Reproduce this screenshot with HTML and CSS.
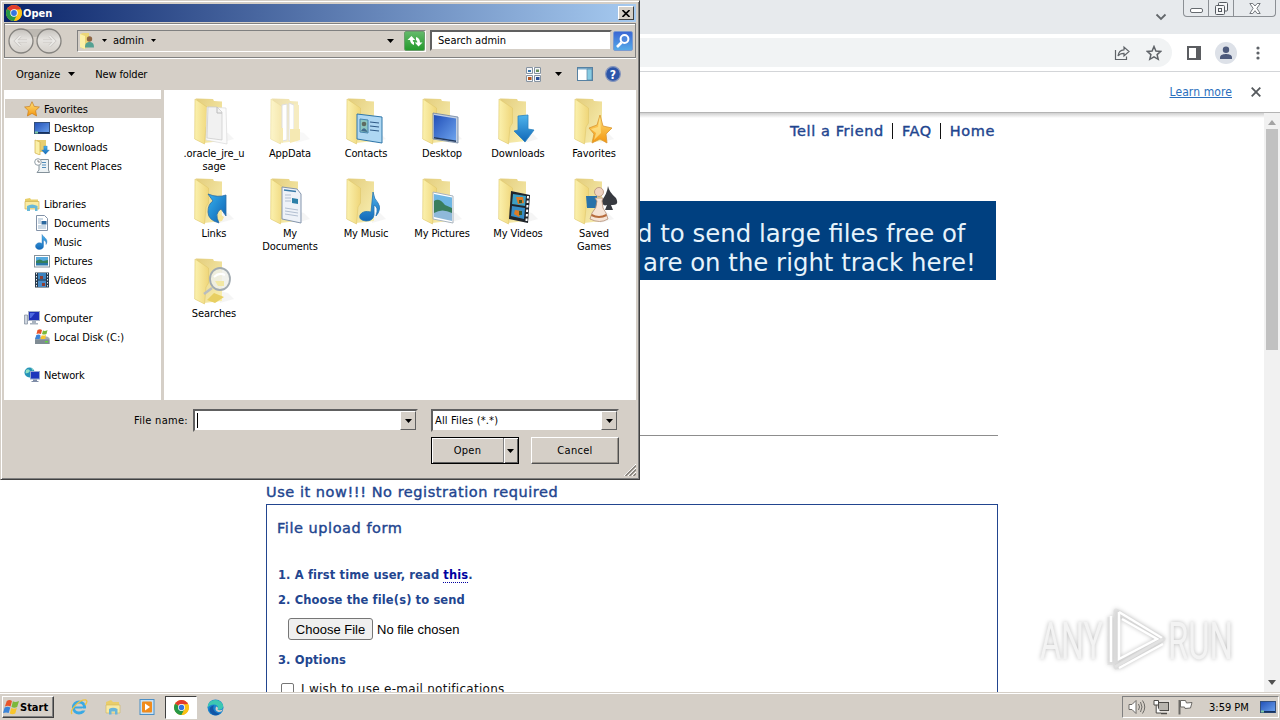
FILE: index.html
```
<!DOCTYPE html>
<html lang="en">
<head>
    <meta charset="UTF-8">
    <meta name="viewport" content="width=device-width, initial-scale=1.0">
    <title>File upload form</title>
    <link rel="stylesheet" href="styles.css">
</head>
<body>

<!-- shared icon shapes -->
<svg class="defs" width="0" height="0">
    <defs>
        <linearGradient id="g-flap" x1="0" x2="1"><stop offset="0" stop-color="#fbf1ae"/><stop offset="1" stop-color="#efd67a"/></linearGradient>
        <linearGradient id="g-back" x1="0" x2="1" y2="1"><stop offset="0" stop-color="#e3cd7c"/><stop offset="1" stop-color="#faf0b4"/></linearGradient>
        <linearGradient id="g-blue" y1="0" x2="0" y2="1"><stop offset="0" stop-color="#4fb4ec"/><stop offset="1" stop-color="#1268b8"/></linearGradient>
        <linearGradient id="g-screen" x1="0" x2="1" y2="1"><stop offset="0" stop-color="#2250b8"/><stop offset="1" stop-color="#6ea4ee"/></linearGradient>
        <linearGradient id="g-star" y1="0" x2="0" y2="1"><stop offset="0" stop-color="#ffe27a"/><stop offset="1" stop-color="#f3960f"/></linearGradient>
        <linearGradient id="g-round" y1="0" x2="0" y2="1"><stop offset="0" stop-color="#c4c1bc"/><stop offset=".45" stop-color="#e6e4e0"/><stop offset="1" stop-color="#d4d0ca"/></linearGradient>
        <linearGradient id="g-edge" x1="0" x2="1" y2="1"><stop offset="0" stop-color="#35b0ee"/><stop offset="1" stop-color="#0d5fb0"/></linearGradient>
        <symbol id="folder" viewBox="0 0 48 48">
            <path d="M30 46 L44 42 L38 36 L30 34z" fill="#efefef" opacity=".6"/>
            <path d="M6 1.5 L23 2 L24 4 L32 4.5 V44 L14 46z" fill="url(#g-back)"/>
            <path d="M5 2 L18.5 11 V26 L16 30 L14.5 47 L4.7 42z" fill="url(#g-flap)" stroke="#dfc86c" stroke-width=".6"/>
        </symbol>
        <symbol id="chrome" viewBox="0 0 16 16">
            <circle cx="8" cy="8" r="8" fill="#fbc116"/>
            <path d="M8 8 L1.1 4 A8 8 0 0 1 14.9 4z" fill="#e33b2e"/>
            <path d="M8 8 L1.1 4 A8 8 0 0 0 8 16 L11.4 10z" fill="#279847"/>
            <path d="M8 4.4 H15.1 A8 8 0 0 1 8 16 L11 10z" fill="#fbc116"/>
            <circle cx="8" cy="8" r="3.7" fill="#fff"/>
            <circle cx="8" cy="8" r="2.9" fill="#3474e0"/>
        </symbol>
        <symbol id="star" viewBox="0 0 16 16">
            <path d="M8 .7 L10.2 5.4 L15.4 6 L11.6 9.7 L12.6 15 L8 12.4 L3.4 15 L4.4 9.7 L.6 6 L5.8 5.4z" fill="url(#g-star)" stroke="#c87d1c" stroke-width=".7"/>
        </symbol>
        <symbol id="note" viewBox="0 0 16 16">
            <path d="M8 .5 C10 4 15 5 12 10.500 C12.500 7.500 10.500 6.500 9.500 6.300 V12 A4 3.400 0 1 1 8 9.500z" fill="url(#g-blue)" stroke="#2470b8" stroke-width=".4"/>
        </symbol>
        <symbol id="down" viewBox="0 0 16 16">
            <path d="M5 1 H11 V8 H15 L8 15.5 L1 8 H5z" fill="url(#g-blue)" stroke="#1b6cae" stroke-width=".5"/>
        </symbol>
        <symbol id="screen" viewBox="0 0 16 16">
            <rect x=".5" y="2.5" width="15" height="11" fill="url(#g-screen)" stroke="#34507c"/>
            <path d="M1 12 H15 V13.5 H1z" fill="#15315e"/><path d="M1 11.5h3v2H1z" fill="#7fc8a0"/>
        </symbol>
        <symbol id="tri" viewBox="0 0 7 4"><path d="M0 0 H7 L3.5 4z" fill="#000"/></symbol>
    </defs>
</svg>

<div class="browser">
    <div class="tab-strip">
        <svg class="tab-search" width="12" height="8" viewBox="0 0 12 8"><path d="M1.5 1.5 L6 6 L10.5 1.5" fill="none" stroke="#63676b" stroke-width="1.8"/></svg>
        <div class="window-controls">
            <span class="wc"><svg width="13" height="5" viewBox="0 0 13 5"><rect x=".5" y=".5" width="12" height="4" rx="1.5" fill="#fff" stroke="#666b70"/></svg></span>
            <span class="wc"><svg width="13" height="13" viewBox="0 0 13 13" fill="#f5f6f7" stroke="#555a60"><rect x="3.5" y=".5" width="9" height="8.500" rx="1"/><rect x=".5" y="3.500" width="9" height="9" rx="1"/><rect x="3.500" y="6.500" width="3" height="3"/></svg></span>
            <span class="wc wc-close"><svg width="12" height="11" viewBox="0 0 12 11"><path d="M.8.5 H3.8 L6 3 L8.2.5 H11.2 L7.900 5.300 L11.200 10.500 H8.200 L6 7.700 L3.800 10.500 H.800 L4.100 5.300z" fill="#fff" stroke="#666b70" stroke-width=".9"/></svg></span>
        </div>
    </div>
    <div class="toolbar">
        <div class="omnibox">
            <svg width="16" height="16" viewBox="0 0 16 16" fill="none" stroke="#5f6368" stroke-width="1.2"><path d="M1.500 5 V14.500 H12.500 V11.500"/><path d="M4 11 C4.500 7 6.500 5 10 4.800 V2 L15 6.500 L10 11 V8.300 C7 8.300 5.300 9 4 11z"/></svg>
            <svg width="16" height="16" viewBox="0 0 16 16"><path d="M8 1.500 L9.900 6 L14.700 6.400 L11.100 9.600 L12.200 14.300 L8 11.800 L3.800 14.300 L4.900 9.600 L1.300 6.400 L6.100 6z" fill="none" stroke="#5f6368" stroke-width="1.500"/></svg>
        </div>
        <svg class="side-panel" width="14" height="14" viewBox="0 0 14 14"><path d="M1 1 H13 V13 H1z" fill="#fff" stroke="#5b5d61" stroke-width="2"/><path d="M9 0 H14 V14 H9z" fill="#5b5d61"/></svg>
        <svg class="avatar" width="22" height="22" viewBox="0 0 22 22"><circle cx="11" cy="11" r="11" fill="#dde1e8"/><circle cx="11" cy="7.800" r="3.200" fill="#4d5a7c"/><path d="M5 17 V15.500 C5 12.500 9 12 11 12 C13 12 17 12.500 17 15.500 V17z" fill="#4d5a7c"/></svg>
        <svg class="kebab" width="4" height="14" viewBox="0 0 4 14" fill="#5f6368"><circle cx="2" cy="2" r="1.600"/><circle cx="2" cy="7" r="1.600"/><circle cx="2" cy="12" r="1.600"/></svg>
    </div>
    <div class="infobar">
        <a class="learn-more">Learn more</a>
        <svg width="10" height="10" viewBox="0 0 10 10"><path d="M.700.700 L9.300 9.300 M9.300.700 L.700 9.300" stroke="#55595d" stroke-width="1.800"/></svg>
    </div>
    <div class="viewport">
        <div class="page">
            <div class="top-links">
                <a>Tell a Friend</a>
                <a>FAQ</a>
                <a>Home</a>
            </div>
            <div class="banner">
                <p class="banner-one">d to send large files free of</p>
                <p class="banner-two">are on the right track here!</p>
            </div>
            <hr>
            <h2>Use it now!!! No registration required</h2>
            <div class="form-box">
                <h3>File upload form</h3>
                <p class="step step-one">1. A first time user, read <a class="this">this</a>.</p>
                <p class="step">2. Choose the file(s) to send</p>
                <div class="file-row">
                    <button class="choose">Choose File</button>
                    <span>No file chosen</span>
                </div>
                <p class="step step-three">3. Options</p>
                <label class="notify"><span class="check"></span><span>I wish to use e-mail notifications</span></label>
            </div>
        </div>
        <div class="scrollbar">
            <svg width="8" height="5" viewBox="0 0 8 5"><path d="M0 5 L4 0 L8 5z" fill="#a3a3a3"/></svg>
            <div class="thumb"></div>
            <svg width="8" height="5" viewBox="0 0 8 5"><path d="M0 0 L4 5 L8 0z" fill="#505050"/></svg>
        </div>
    </div>
</div>

<div class="taskbar">
    <div class="start">
        <svg width="17" height="16" viewBox="0 0 18 17"><path d="M4 2 Q7 0 9.500 2 L8 8 Q5 6.500 2 8z" fill="#e8552a"/><path d="M10.500 2.500 Q13 4 17 2 L15 8.500 Q12 10 9 8.500z" fill="#7cb83a"/><path d="M1.700 9 Q5 7.500 7.700 9 L6 15 Q3.500 13.500 0 15z" fill="#3b84d8"/><path d="M8.700 9.500 Q11.500 11 14.700 9.500 L13 15.500 Q10 17 7.200 15.500z" fill="#f7c52c"/></svg>
        <b>Start</b>
    </div>
    <div class="quick">
        <span class="task"><svg width="18" height="18" viewBox="0 0 18 18"><circle cx="9" cy="9.500" r="5.600" fill="none" stroke="#39a9e4" stroke-width="3"/><path d="M5 9.500 H15" stroke="#39a9e4" stroke-width="2"/><path d="M12 11.500 H17" stroke="#d4d0c8" stroke-width="2"/><path d="M2 16 C-1 12 10 1 16 2 C18 3 16 6 15 7" fill="none" stroke="#edc343" stroke-width="1.300"/></svg></span>
        <span class="task"><svg width="18" height="18" viewBox="0 0 18 18"><path d="M2 4 L7 2 L9 4 H15 V15 H2z" fill="#e9cd6a"/><path d="M2 7 H16 V15 H2z" fill="#f8e9a2" stroke="#d1b55a" stroke-width=".600"/><path d="M5 16.500 V11 Q9 8.500 13.500 11 V16.500 H11 V13.500 H7.500 V16.500z" fill="#69b5d9"/></svg></span>
        <span class="task"><svg width="18" height="18" viewBox="0 0 18 18"><rect x="2" y="1.500" width="14" height="15" fill="#c8e1f4" stroke="#4b8fc6"/><rect x="4" y="3.500" width="10" height="11" rx="1" fill="#f08b1c"/><path d="M7 5.500 L12 9 L7 12.500z" fill="#fff"/></svg></span>
        <span class="task active"><svg width="15" height="15"><use href="#chrome"/></svg></span>
        <span class="task"><svg width="17" height="17" viewBox="0 0 17 17"><circle cx="8.500" cy="8.500" r="8" fill="#1a84cf"/><path d="M1 6 C3 0 13-1 16 6 C17 10 13 11.500 10.500 10.500 C12 8 10 5.500 7 5.500 C4 5.500 1.500 7 .700 9z" fill="#3cc7b2"/><path d="M7 6.500 C5 9 7 14 13 14.500 C10 18 3 16 2.500 11 C2.500 8 5 6.500 7 6.500z" fill="#1356a6"/><path d="M9 7.500 Q12 8.500 10.500 10.500 Q12 12 16 10.500 Q14.500 13.500 11.500 13 Q7.500 12 9 7.500z" fill="#d5cfc7"/></svg></span>
    </div>
    <div class="tray">
        <svg width="18" height="16" viewBox="0 0 18 16" fill="#fff" stroke="#6c6a66"><path d="M1 5.500 H4 L8 1.500 V14.500 L4 10.500 H1z"/><path d="M10.500 5 Q12.500 8 10.500 11 M12.500 3 Q15.500 8 12.500 13 M14.500 1.500 Q19 8 14.500 14.500" fill="none"/></svg>
        <svg width="17" height="16" viewBox="0 0 17 16"><rect x="5.500" y="3.500" width="10" height="8" fill="#b8b5af" stroke="#4c4a47"/><rect x="4" y="2" width="13" height="11" fill="none" stroke="#f5f5f5" stroke-width=".800"/><path d="M8 14.500 H14" stroke="#4c4a47" stroke-width="1.500"/><path d="M1 1.500 H5.500 V6 H1z M3.200 6 V14 H8" fill="#fff" stroke="#4c4a47"/></svg>
        <svg width="17" height="16" viewBox="0 0 17 16"><path d="M2.500 1 V15.500" stroke="#6c6a66" stroke-width="2"/><path d="M3.500 1.500 H8.500 L9.500 4 L15 3.500 L13.500 9 L8 9.500 L7.500 8 H3.500z" fill="#fff" stroke="#6c6a66"/></svg>
        <span class="clock">3:59 PM</span>
        <svg width="16" height="16"><use href="#screen"/></svg>
    </div>
</div>

<!-- watermark -->
<svg class="watermark" width="204" height="72" viewBox="0 0 204 72">
    <g fill="none" stroke-linejoin="round" stroke="#dcdcdc" stroke-width="5" opacity=".6"><path d="M80 6 L127 34 L80 62z M74 12 V60"/></g>
    <g class="wm-text"><text x="4" y="54" textLength="63" lengthAdjust="spacingAndGlyphs">ANY</text><text x="132" y="54" textLength="65" lengthAdjust="spacingAndGlyphs">RUN</text></g>
    <g fill="none" stroke="#fff" stroke-width="2.500"><path d="M75 57 V11 M83 7 L126 33 M83 7 V54 L121 34 L86 14 M83 63 L127 39"/></g>
    <path d="M79 62 L127 34" stroke="#e2e2e2" stroke-width="3"/>
</svg>

<div class="dialog">
    <div class="title-bar">
        <svg width="16" height="16"><use href="#chrome"/></svg>
        <b>Open</b>
        <span class="close"><svg width="8" height="7" viewBox="0 0 8 7"><path d="M.500 0 L7.500 7 M7.500 0 L.500 7" stroke="#000" stroke-width="1.600"/></svg></span>
    </div>
    <div class="nav-row">
        <svg class="arrows" width="56" height="28" viewBox="0 0 56 28">
            <path d="M14 2 H42 V7 Q28 13 14 7z" fill="#bdb9b2"/>
            <circle cx="14" cy="14" r="12" fill="url(#g-round)" stroke="#85837f" stroke-width="1.300"/>
            <circle cx="42" cy="14" r="12" fill="url(#g-round)" stroke="#85837f" stroke-width="1.300"/>
            <path d="M20 14 H9 M13.500 9 L8.500 14 L13.500 19 M36 14 H47 M42.500 9 L47.500 14 L42.500 19" fill="none" stroke="#c9c6c2" stroke-width="3"/>
            <path d="M20 14 H9 M13.500 9 L8.500 14 L13.500 19 M36 14 H47 M42.500 9 L47.500 14 L42.500 19" fill="none" stroke="#ebeae7" stroke-width="1.600"/>
        </svg>
        <div class="address">
            <svg width="16" height="16" viewBox="0 0 16 16"><path d="M1 1 L4 0 H10 V14 L5 16 L1 14z" fill="#ecd677"/><path d="M1 1 L6 3 V16 L1 14z" fill="#fbf0a8"/><circle cx="10.500" cy="6" r="2.700" fill="#8f6643"/><path d="M6 14.500 C6 9.500 8.500 9 10.500 9 S15 9.500 15 14.500z" fill="#54a193"/></svg>
            <svg class="crumb" width="5" height="3"><use href="#tri"/></svg>
            <span>admin</span>
            <svg class="crumb" width="5" height="3"><use href="#tri"/></svg>
            <svg class="history" width="7" height="4"><use href="#tri"/></svg>
        </div>
        <span class="refresh"><svg width="16" height="14" viewBox="0 0 16 14"><path d="M4.500 2 L.500 6 H3 Q3.500 10 7 11 V8 Q5.500 8 5.800 6 H8.200z M11.500 12.500 L15.500 8.500 H13 Q13 4 9 3 V6 Q10.500 6.500 10.300 8.500 H7.800z" fill="#fff"/></svg></span>
        <div class="search">Search admin</div>
        <span class="find"><svg width="16" height="16" viewBox="0 0 16 16"><circle cx="9.500" cy="6" r="3.900" fill="#4e88dd" stroke="#fff" stroke-width="2"/><path d="M6.500 9.500 L2 14" stroke="#fff" stroke-width="2.600"/></svg></span>
    </div>
    <div class="commands">
        <span class="organize">Organize</span>
        <svg width="7" height="4"><use href="#tri"/></svg>
        <span class="new-folder">New folder</span>
        <svg class="view-icon" width="15" height="15" viewBox="0 0 15 15"><path d="M0 0h15v15H0z" fill="#fff"/><g stroke="#8592a0" fill="#f4f6f8"><path d="M.500.500h6v6h-6z M8.500.500h6v6h-6z M.500 8.500h6v6h-6z M8.500 8.500h6v6h-6z"/></g><path d="M2 3h3V5H2z" fill="#3a76ac"/><path d="M10 2.500h3V5h-3z" fill="#68905d"/><path d="M2 10h3.500V13H2z" fill="#b4561e"/><path d="M10 10h3.500V13H10z" fill="#2b4f96"/></svg>
        <svg class="view-tri" width="7" height="4"><use href="#tri"/></svg>
        <svg class="pane-icon" width="16" height="14" viewBox="0 0 16 14"><rect x=".500" y=".500" width="15" height="13" fill="#fff" stroke="#5681a2"/><path d="M1 1h14v1.500H1z" fill="#7aa9c8"/><path d="M10 2h5v11h-5z" fill="#87cbe2" stroke="#5681a2" stroke-width=".700"/></svg>
        <svg width="16" height="16" viewBox="0 0 16 16"><circle cx="8" cy="8" r="7.400" fill="#2c55a8" stroke="#8797bd" stroke-width="1.200"/><text class="help" x="8" y="12.500" text-anchor="middle">?</text></svg>
    </div>
    <div class="panes">
        <div class="tree">
            <div class="node selected"><svg width="16" height="16"><use href="#star"/></svg><span>Favorites</span></div>
            <div class="node child"><svg width="16" height="16"><use href="#screen"/></svg><span>Desktop</span></div>
            <div class="node child"><svg width="16" height="16" viewBox="0 0 16 16"><path d="M3 1h9v12H3z" fill="#e8ce70"/><path d="M1 1 L6 3 V16 L1 14z" fill="#fbf0a8" stroke="#d1b04a" stroke-width=".700"/><use href="#down" x="7" y="6" width="9" height="10"/></svg><span>Downloads</span></div>
            <div class="node child"><svg width="16" height="16" viewBox="0 0 16 16"><path d="M5 1.500 H14.500 V12 L15.500 14.500 H3 L5 12z" fill="#edf2f4" stroke="#84919a"/><path d="M8 4.500h4M8 7h4M8 9.500h4" stroke="#528dbb"/><circle cx="4" cy="4" r="3.300" fill="#fff" stroke="#929fa8"/><path d="M4 2v2h2" fill="none" stroke="#555" stroke-width=".700"/></svg><span>Recent Places</span></div>
            <div class="node gap"><svg width="16" height="16" viewBox="0 0 16 16"><path d="M1 3 L6 2 L7 3.500 H14 V13 H1z" fill="#e8cf69"/><path d="M1 5.500h14V13H1z" fill="#faeca4" stroke="#cfb253" stroke-width=".700"/><path d="M3 15 V10 Q8 7 13.500 10 V15 H11 V12 H6 V15z" fill="#68b9d8"/></svg><span>Libraries</span></div>
            <div class="node child"><svg width="16" height="16" viewBox="0 0 16 16"><path d="M2.500.500 H10.500 L13.500 3.500 V15.500 H2.500z" fill="#fff" stroke="#8292a8"/><path d="M4 4h5M4 6h3M4 8h3M4 11h8M4 13h8" stroke="#84a3c2" stroke-width=".800"/><path d="M7.500 6h5v3.500h-5z" fill="#2d699f"/></svg><span>Documents</span></div>
            <div class="node child"><svg width="16" height="16"><use href="#note"/></svg><span>Music</span></div>
            <div class="node child"><svg width="16" height="16" viewBox="0 0 16 16"><rect x=".500" y="2.500" width="15" height="11.500" fill="#fff" stroke="#86929c"/><path d="M2 4h12v4H2z" fill="#55a9de"/><path d="M2 8 Q6 5 9 8 L14 7 V10 H2z" fill="#36805b"/><path d="M2 10h12v2.500H2z" fill="#2a78a8"/></svg><span>Pictures</span></div>
            <div class="node child"><svg width="16" height="16" viewBox="0 0 16 16"><path d="M1 .500h14v15H1z" fill="#27394b"/><path d="M4 1h8v6.500H4z" fill="#3d83bf"/><path d="M4 8.500h8V15H4z" fill="#488cc8"/><path d="M6 4h3v3H6z M8 11h3v3H8z" fill="#8c3e34"/><path d="M2.500 1v14M13.500 1v14" stroke="#e5eaf0" stroke-dasharray="1.500 1.500"/></svg><span>Videos</span></div>
            <div class="node gap"><svg width="16" height="16" viewBox="0 0 16 16"><path d="M.500 5h3v9h-3z" fill="#cfd6df" stroke="#7d8a9b" stroke-width=".700"/><rect x="4.500" y="1.500" width="11" height="9" fill="#1e31b8" stroke="#a5b0c7"/><path d="M6 3h5l-4 5H6z" fill="#4f6be1"/><path d="M8 11h4v2h2v1.500H6V13h2z" fill="#a9b3bf"/></svg><span>Computer</span></div>
            <div class="node child"><svg width="16" height="16" viewBox="0 0 16 16"><path d="M1 9 L3 7.500 H13 L15.500 9 V15 H1z" fill="#a4acb2"/><path d="M1 10.500h14.500V15H1z" fill="#7f8b93"/><path d="M11 12h3v1.500h-3z" fill="#62d53d"/><path d="M3.500 1 Q6 -.5 8 1 L7 5 Q4.500 4 2.500 5z" fill="#e8552a"/><path d="M9 1.500 Q11 2.500 13.500 1 L12.500 5 Q10 6 8 5z" fill="#7cb83a"/><path d="M2.300 6 Q4.500 5 6.500 6 L5.500 10 H1.200z" fill="#3b84d8"/><path d="M7.700 6.200 Q9.500 7 12 6 L11.200 10 H6.700z" fill="#f7c52c"/></svg><span>Local Disk (C:)</span></div>
            <div class="node gap"><svg width="16" height="16" viewBox="0 0 16 16"><circle cx="5.500" cy="5.500" r="5" fill="#2593b8"/><path d="M2 3 Q5 1 6 4 Q4 7 1.500 6z M7 1 Q10 2 9 4z" fill="#8fe0c4"/><rect x="6.500" y="4.500" width="9" height="7.500" fill="#1c36bc" stroke="#93a6d0"/><path d="M9 12.500h4v1.500h1.500V15h-7v-1H9z" fill="#7f8da7"/></svg><span>Network</span></div>
        </div>
        <div class="files">
            <div class="file"><svg width="48" height="48" viewBox="0 0 48 48"><use href="#folder"/><path d="M17 10 L36 11 L37 47 L16 43z" fill="#fbfbfb" stroke="#dadada" stroke-width=".700"/><path d="M18 10 L27 10 L32 15 V43 L17 41z" fill="#f1f1f1" stroke="#c9c9c9" stroke-width=".700"/><path d="M27 10 V16 H32" fill="none" stroke="#bbb"/></svg><span>.oracle_jre_u<br>sage</span></div>
            <div class="file"><svg class="faded" width="48" height="48" viewBox="0 0 48 48"><use href="#folder"/><path d="M16 8 L21 7 V43 L16 44z M23 6 L28 8 V43 L23 44z" fill="#fff" stroke="#cfcfcf"/><path d="M28 7 L33 8 V42 L28 43z" fill="#f2e3a0"/><path d="M14 31 H17 V46 L13 44z M24 32 H34 V43 L24 46z" fill="#f1de8b"/></svg><span>AppData</span></div>
            <div class="file"><svg width="48" height="48" viewBox="0 0 48 48"><use href="#folder"/><path d="M15 17 L40 20 V46 L15 42z" fill="#aed7f2" stroke="#2f76a9"/><path d="M18 22 L26 23 V36 L18 35z" fill="#8cc6c0" stroke="#4684ae"/><circle cx="22" cy="27" r="2.300" fill="#5e6b5f"/><path d="M19 34 Q22 28 25.500 35z" fill="#416b8d"/><path d="M28 25 L37 26 M28 29 L37 30 M28 33 L37 34" stroke="#2f5a86" stroke-width="1.200"/></svg><span>Contacts</span></div>
            <div class="file"><svg width="48" height="48" viewBox="0 0 48 48"><use href="#folder"/><path d="M15 16 L40 20 V46 L15 42z" fill="#c3d0e2" stroke="#6e839e" stroke-width=".8"/><path d="M16 18 L38 21.500 V44 L16 40.500z" fill="url(#g-screen)"/><path d="M16 40 L38 43.500 V45 L16 41.500z" fill="#22395e"/></svg><span>Desktop</span></div>
            <div class="file"><svg width="48" height="48" viewBox="0 0 48 48"><use href="#folder"/><path d="M24 19 L34 18 V32 L40 33 L31 45 L20 34 L24 33z" fill="url(#g-blue)" stroke="#2b83bf" stroke-width=".800"/></svg><span>Downloads</span></div>
            <div class="file"><svg width="48" height="48" viewBox="0 0 48 48"><use href="#folder"/><path d="M30 18 L33 29 L42 31 L36 37 L37 46 L30 42 L22 46 L24 37 L19 31 L27 28z" fill="url(#g-star)" stroke="#d99732" stroke-width=".800"/><path d="M30 20 L31 36 L24 43 L26 36 L21 32 L28 30z" fill="#fff0a0" opacity=".600"/></svg><span>Favorites</span></div>
            <div class="file"><svg width="48" height="48" viewBox="0 0 48 48"><use href="#folder"/><path d="M27 35 L34 40 L32 44 L27 45z" fill="#f6e59b"/><path d="M18 17 Q28 21 36 18 V39 L31 32 Q24 36 29 46 Q18 43 18 35 Q18 27 23 24z" fill="url(#g-edge)" stroke="#2c6da6" stroke-width=".800"/></svg><span>Links</span></div>
            <div class="file"><svg width="48" height="48" viewBox="0 0 48 48"><use href="#folder"/><path d="M16 10 L31 12 L35 17 V46 L16 42z" fill="#eef2f8" stroke="#8495ad"/><path d="M18 13 L30 14.500" stroke="#387aa9" stroke-width="1.500"/><path d="M19 18h6M19 21h6M19 24h6M19 31 L32 33M19 34 L32 36M19 37 L32 39" stroke="#b2bfd1"/><path d="M26 21 L32 22 V27 L26 26z" fill="#2c80a9"/></svg><span>My<br>Documents</span></div>
            <div class="file"><svg width="48" height="48" viewBox="0 0 48 48"><use href="#folder"/><path d="M31 15 Q32 22 36 26 Q40 32 34 39 Q37 30 32 28 V38 Q31 44 24 44 Q16 43 18 38 Q21 33 29 35z" fill="url(#g-blue)" stroke="#2574b1" stroke-width=".800"/></svg><span>My Music</span></div>
            <div class="file"><svg width="48" height="48" viewBox="0 0 48 48"><use href="#folder"/><path d="M15 15 L35 19 V46 L15 42z" fill="#fff" stroke="#a9b4be"/><path d="M16 17 L34 20.500 V32 L16 29z" fill="#6eb6e4"/><path d="M16 24 Q21 20 27 28 L34 31 V42 L16 38z" fill="#397e5e"/><path d="M16 36 Q24 31 34 36 V44 L16 40z" fill="#8fb9da"/></svg><span>My Pictures</span></div>
            <div class="file"><svg width="48" height="48" viewBox="0 0 48 48"><use href="#folder"/><path d="M17 14 L36 18 L34 46 L15 42z" fill="#20252b"/><path d="M19 17 L32 19 L31 29 L18 27z" fill="#3da0c4"/><path d="M18 29 L31 31 L30 42 L17 39z" fill="#368dc7"/><path d="M22 20 L29 20 L30 26 L24 27z M21 33 L28 34 L25 40 L20 37z" fill="#de7b24"/><path d="M25 23h3v3h-3z M25 34h3v4h-3z" fill="#3c5a2b"/><path d="M34 19 L32.500 44" stroke="#fff" stroke-width="2" stroke-dasharray="2.500 2"/></svg><span>My Videos</span></div>
            <div class="file"><svg width="48" height="48" viewBox="0 0 48 48"><use href="#folder"/><path d="M38 9 Q39 15 46 21 Q50 29 41 28 L43 33 H35 L37 28 Q32 30 32 23 Q37 17 38 9z" fill="#373a40"/><path d="M16 19 H27 V31 H17z" fill="#2772aa"/><circle cx="29" cy="15" r="4.500" fill="#efd3c0" stroke="#b28e77" stroke-width=".800"/><path d="M25 21 H33 L32 24 Q32 32 36 36 L38 42 Q30 47 20 42 L22 36 Q27 31 27 24z" fill="#f6e4d6" stroke="#b28e77" stroke-width=".800"/><path d="M22 37 Q29 41 36 37 L37 39 Q29 43 21 39z" fill="#b66b3c"/></svg><span>Saved<br>Games</span></div>
            <div class="file"><svg width="48" height="48" viewBox="0 0 48 48"><use href="#folder"/><path d="M24 36 L34 40 L25 46 L17 43z" fill="#e8cf62"/><path d="M22 31 L14 37" stroke="#b8bdc0" stroke-width="2.500"/><ellipse cx="30" cy="22" rx="10" ry="11" fill="#eef0e9" fill-opacity=".850" stroke="#a2abb1" stroke-width="1.800"/><path d="M24 20 Q29 15 35 18" fill="none" stroke="#fff" stroke-width="2"/><path d="M25 24h9v5h-6z" fill="#f2e8a4"/></svg><span>Searches</span></div>
        </div>
    </div>
    <div class="footer">
        <div class="footer-row">
            <label>File name:</label>
            <div class="combo name-box"><span class="caret"></span><span class="drop"><svg width="7" height="4"><use href="#tri"/></svg></span></div>
            <div class="combo type-box"><span>All Files (*.*)</span><span class="drop"><svg width="7" height="4"><use href="#tri"/></svg></span></div>
        </div>
        <div class="footer-row buttons">
            <div class="open-btn"><span class="open-text">Open</span><span class="split"><svg width="7" height="4"><use href="#tri"/></svg></span></div>
            <div class="cancel-btn">Cancel</div>
        </div>
        <svg class="grip" width="12" height="12" viewBox="0 0 12 12"><path d="M0 12 L12 0 M4 12 L12 4 M8 12 L12 8" stroke="#fff"/><path d="M1.500 12 L12 1.500 M5.500 12 L12 5.500 M9.500 12 L12 9.500" stroke="#817d76" stroke-width="1.400"/></svg>
    </div>
</div>

</body>
</html>
```
FILE: styles.css
```
* {
    box-sizing: border-box;
}

body {
    margin: 0;
    width: 1280px;
    height: 720px;
    overflow: hidden;
    display: flex;
    flex-direction: column;
    background-color: #fff;
    font-family: "DejaVu Sans Condensed", "DejaVu Sans", sans-serif;
    font-size: 11px;
    color: #000;
}

svg {
    display: block;
    flex: none;
}

p, h2, h3 {
    margin: 0;
}

.defs {
    position: absolute;
}

/* browser window */
.browser {
    height: 692px;
    display: flex;
    flex-direction: column;
}

.tab-strip {
    height: 34px;
    background-color: #e7eaed;
    display: flex;
    justify-content: flex-end;
    flex: none;
}

.tab-search {
    margin: 13px 16px 0 0;
}

.window-controls {
    display: flex;
    width: 93px;
    height: 17px;
    margin-right: 4px;
    border: 1px solid #8b8f94;
    border-top: none;
    border-radius: 0 0 4px 4px;
}

.wc {
    width: 25px;
    display: flex;
    justify-content: center;
    align-items: center;
    border-right: 1px solid #8b8f94;
}

.wc:first-child {
    padding-top: 4px;
}

.wc-close {
    flex: 1;
    border: none;
}

.toolbar {
    height: 38px;
    display: flex;
    align-items: center;
    border-bottom: 1px solid #d3d5d8;
    flex: none;
}

.omnibox {
    width: 1172px;
    height: 29px;
    background-color: #f1f3f4;
    border-radius: 0 15px 15px 0;
    display: flex;
    justify-content: flex-end;
    align-items: center;
    gap: 16px;
    padding-right: 10px;
}

.side-panel {
    margin-left: 15px;
}

.avatar {
    margin-left: 14px;
}

.kebab {
    margin-left: 19px;
}

.infobar {
    height: 41px;
    display: flex;
    justify-content: flex-end;
    align-items: center;
    padding-right: 19px;
    gap: 19px;
    border-bottom: 1px solid #b4b4b4;
    flex: none;
}

.learn-more {
    color: #2a6fbd;
    text-decoration: underline;
    font-size: 12px;
    letter-spacing: 0.1px;
}

.viewport {
    flex: 1;
    min-height: 0;
    overflow: hidden;
    display: flex;
    background: linear-gradient(#cfcfcf, #fff 5px);
}

.page {
    width: 732px;
    margin-left: 266px;
    font-family: "DejaVu Sans", sans-serif;
    color: #22458f;
}

.top-links {
    height: 16px;
    margin-top: 10px;
    padding-right: 3px;
    display: flex;
    justify-content: flex-end;
    font-size: 14.5px;
    letter-spacing: 0.6px;
    line-height: 16px;
    -webkit-text-stroke: 0.4px #22458f;
}

.top-links a + a {
    border-left: 1px solid #111;
    margin-left: 8px;
    padding-left: 9px;
}

.banner {
    width: 730px;
    height: 79px;
    margin-top: 62px;
    background-color: #004080;
    color: #e6f3fb;
    font-size: 24.4px;
    line-height: 29px;
    padding-top: 18px;
    white-space: nowrap;
}

.banner p {
    margin-left: 371px;
}

.banner .banner-two {
    margin-left: 377px;
}

hr {
    margin: 155px 0 0;
    border: none;
    border-top: 1px solid #8d8d8d;
}

h2, h3 {
    font-size: 14.5px;
    letter-spacing: 0.55px;
    font-weight: normal;
    line-height: 18px;
    -webkit-text-stroke: 0.4px #22458f;
}

h2 {
    margin-top: 47px;
}

.form-box {
    border: 1px solid #22458f;
    margin-top: 3px;
    padding: 14px 10px 0;
    height: 400px;
}

.step {
    font-size: 11.5px;
    font-weight: bold;
    letter-spacing: 0.12px;
    line-height: 16px;
    margin: 9px 0 0 1px;
}

.step-one {
    margin-top: 30px;
}

.this {
    color: #0000a0;
    border-bottom: 1px dotted #0000a0;
}

.file-row {
    display: flex;
    align-items: center;
    gap: 4px;
    margin: 10px 0 0 11px;
    font-family: "Liberation Sans", Arial, sans-serif;
    font-size: 13px;
    color: #000;
}

.choose {
    width: 85px;
    height: 22px;
    padding: 0;
    border: 1px solid #767676;
    border-radius: 3px;
    background-color: #efefef;
    font: inherit;
}

.step-three {
    margin-top: 12px;
}

.notify {
    display: flex;
    align-items: center;
    gap: 7px;
    margin: 13px 0 0 4px;
    font-size: 12px;
    letter-spacing: 0.28px;
    line-height: 16px;
    color: #111;
}

.check {
    width: 13px;
    height: 13px;
    border: 1px solid #767676;
    border-radius: 2px;
}

.scrollbar {
    width: 16px;
    margin-left: auto;
    background-color: #f1f1f1;
    display: flex;
    flex-direction: column;
    align-items: center;
    padding: 7px 0 7px;
}

.thumb {
    width: 12px;
    height: 221px;
    margin: 4px 0 auto;
    background-color: #c1c1c1;
}

.watermark {
    position: absolute;
    left: 1036px;
    top: 605px;
    overflow: visible;
    filter: drop-shadow(0 0 2px #bbb);
}

.wm-text {
    font-family: Roboto, sans-serif;
    font-size: 51px;
    fill: #f3f3f3;
}

/* taskbar */
.taskbar {
    height: 28px;
    background-color: #d5cfc7;
    border-top: 1px solid #d5cfc7;
    box-shadow: inset 0 1px #fff;
    display: flex;
    align-items: center;
    padding-top: 1px;
}

.start {
    width: 52px;
    height: 22px;
    margin-left: 2px;
    display: flex;
    align-items: center;
    border: 1px solid;
    border-color: #fff #404040 #404040 #fff;
    box-shadow: inset -1px -1px #808080;
}

.quick {
    display: flex;
    margin-left: 8px;
}

.task {
    width: 34px;
    height: 23px;
    display: flex;
    align-items: center;
    justify-content: center;
}

.active {
    width: 32px;
    margin: 0 1px;
    background-color: #fff;
    border: 1px solid;
    border-color: #404040 #fff #fff #404040;
}

.tray {
    margin-left: auto;
    width: 157px;
    height: 22px;
    margin-right: 1px;
    border: 1px solid;
    border-color: #808080 #fff #fff #808080;
    display: flex;
    align-items: center;
    padding-left: 5px;
    gap: 7px;
}

.clock {
    margin: 0 4px 0 8px;
    width: 40px;
    white-space: nowrap;
}

/* file dialog */
.dialog {
    position: absolute;
    left: 0;
    top: 0;
    width: 640px;
    height: 480px;
    padding: 3px;
    background-color: #d5cfc7;
    border: 1px solid;
    border-color: #d5cfc7 #404040 #404040 #d5cfc7;
    box-shadow: inset 1px 1px #fff, inset -1px -1px #808080;
}

.title-bar {
    height: 18px;
    display: flex;
    align-items: center;
    padding: 0 2px;
    background: linear-gradient(to right, #0a246a, #a6caf0);
    color: #fff;
}

.title-bar b {
    margin-left: 1px;
    font-size: 11px;
}

.close {
    width: 16px;
    height: 14px;
    margin-left: auto;
    display: flex;
    align-items: center;
    justify-content: center;
    background-color: #d5cfc7;
    border: 1px solid;
    border-color: #fff #404040 #404040 #fff;
}

.nav-row {
    height: 35px;
    margin-top: 1px;
    display: flex;
    align-items: center;
    padding-left: 3px;
    border: 1px solid #808080;
    box-shadow: 0 1px #fff, inset 0 1px #fff;
}

.address {
    width: 349px;
    height: 22px;
    margin-left: 14px;
    padding: 0 30px 0 1px;
    border: 1px solid;
    border-color: #808080 #fff #fff #808080;
    display: flex;
    align-items: center;
}

.arrows {
    margin-left: -1px;
}

.address .crumb {
    margin: 0 6px 0 7px;
}

.address .history {
    margin: 0 -13px 0 auto;
}

.refresh, .find {
    width: 20px;
    height: 20px;
    display: flex;
    align-items: center;
    justify-content: center;
    border-radius: 2px;
}

.refresh {
    width: 21px;
    background: linear-gradient(#63b96a, #249b2c);
    border: 1px solid #6a9e6b;
    margin-left: -22px;
}

.address {
    padding-right: 44px;
}

.search {
    width: 182px;
    height: 21px;
    margin-left: 5px;
    padding-left: 6px;
    line-height: 17px;
    background-color: #fff;
    border: 2px solid;
    border-color: #606060 #d5cfc7 #d5cfc7 #606060;
}

.find {
    margin-left: 1px;
    background: linear-gradient(#3b67d4, #55aae8);
    border: 1px solid #7b9bd0;
}

.commands {
    height: 32px;
    padding: 0 15px 0 12px;
    display: flex;
    align-items: center;
}

.organize {
    margin-right: 8px;
}

.new-folder {
    margin-left: 20px;
    letter-spacing: -0.15px;
}

.view-icon {
    margin-left: auto;
}

.view-tri {
    margin: 0 15px 0 14px;
}

.pane-icon {
    margin-right: 12px;
}

.help {
    font-size: 12px;
    font-weight: bold;
    fill: #fff;
}

.panes {
    height: 310px;
    display: flex;
    gap: 3px;
}

.tree {
    width: 157px;
    padding: 9px 0 0 1px;
    background-color: #fff;
}

.node {
    height: 19px;
    padding-left: 19px;
    display: flex;
    align-items: center;
    gap: 4px;
}

.node span {
    padding-top: 2px;
    letter-spacing: -0.08px;
}

.child {
    padding-left: 29px;
}

.gap {
    margin-top: 19px;
}

.selected {
    background-color: #d5cfc7;
}

.files {
    flex: 1;
    background-color: #fff;
    display: grid;
    grid-template-columns: repeat(6, 76px);
    grid-auto-rows: 80px;
    align-content: start;
    padding: 7px 0 0 12px;
}

.file {
    display: flex;
    flex-direction: column;
    align-items: center;
    text-align: center;
    line-height: 13px;
    letter-spacing: -0.12px;
    gap: 2px;
}

.faded {
    opacity: 0.65;
}

.footer {
    padding: 9px 17px 0 0;
}

.footer label {
    letter-spacing: 0.3px;
}

.footer-row {
    display: flex;
    justify-content: flex-end;
    align-items: center;
}

.combo {
    height: 23px;
    display: flex;
    align-items: center;
    background-color: #fff;
    border: 2px solid;
    border-color: #606060 #d5cfc7 #d5cfc7 #606060;
}

.name-box {
    width: 225px;
    margin: 0 13px 0 5px;
}

.type-box {
    width: 188px;
    padding-left: 2px;
    letter-spacing: 0.15px;
}

.caret {
    width: 1px;
    height: 15px;
    margin-left: 2px;
    background-color: #000;
}

.drop {
    width: 16px;
    height: 19px;
    margin-left: auto;
    display: flex;
    align-items: center;
    justify-content: center;
    background-color: #d5cfc7;
    border: 1px solid;
    border-color: #fff #606060 #606060 #fff;
}

.buttons {
    margin-top: 5px;
    gap: 12px;
}

.open-btn {
    width: 88px;
    height: 27px;
    display: flex;
    border: 1px solid #000;
    box-shadow: inset 1px 1px #fff, inset -1px -1px #606060;
}

.open-text {
    width: 72px;
    line-height: 26px;
    text-align: center;
    letter-spacing: 0.3px;
    border-right: 1px solid #808080;
}

.split {
    flex: 1;
    display: flex;
    align-items: center;
    justify-content: center;
    padding-right: 2px;
    border-left: 1px solid #fff;
}

.cancel-btn {
    width: 88px;
    height: 27px;
    line-height: 26px;
    text-align: center;
    letter-spacing: 0.3px;
    border: 1px solid;
    border-color: #fff #505050 #505050 #fff;
    box-shadow: inset -1px -1px #9a958d;
}

.grip {
    position: absolute;
    right: 3px;
    bottom: 3px;
}
```
